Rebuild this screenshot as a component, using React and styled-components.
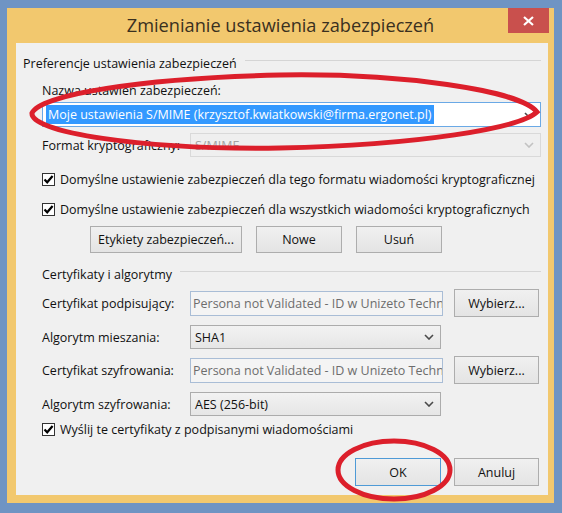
import React from 'react'
import styled, { createGlobalStyle } from 'styled-components'

const GlobalStyle = createGlobalStyle`
  html, body {
    margin: 0;
    padding: 0;
    background: #6f94c3;
  }
  body {
    font-family: "Open Sans", "Noto Sans", sans-serif;
  }
`

const Page = styled.div`
  position: relative;
  width: 562px;
  height: 513px;
  box-sizing: border-box;
  padding: 8px 8px 10px 7px;
  background: #6f94c3;
`

const Window = styled.div`
  height: 495px;
  display: flex;
  flex-direction: column;
  background: #f2c86e;
`

const TitleBar = styled.div`
  height: 35px;
  display: flex;
  align-items: flex-start;
  padding: 0 5px 0 46px;
`

const Title = styled.div`
  flex: 1;
  text-align: center;
  font-size: 18.2px;
  line-height: 35px;
  color: #3a301f;
`

const CloseButton = styled.div`
  width: 41px;
  height: 25px;
  display: flex;
  align-items: center;
  justify-content: center;
  background: #c9504d;
`

const Client = styled.div`
  flex: 1;
  margin: 0 6px 8px 9px;
  padding: 0 7px;
  background: #f0f0f0;
  display: flex;
  flex-direction: column;
  font-size: 12.5px;
  color: #111;
`

const Row = styled.div`
  display: flex;
  align-items: center;
  height: ${p => p.$h || 16}px;
  margin-top: ${p => p.$top || 0}px;
  padding-left: ${p => (p.$indent ?? 19)}px;
  padding-right: ${p => p.$end ? 2 : 0}px;
  justify-content: ${p => p.$end ? 'flex-end' : 'flex-start'};
  gap: ${p => p.$gap || 0}px;
  white-space: nowrap;
`

const GroupLine = styled.div`
  flex: 1;
  height: 1px;
  margin: 0 0 6px 8px;
  background: #d5d5d5;
`

const FieldLabel = styled.div`
  width: 148px;
  flex: none;
`

const Combo = styled.div`
  position: relative;
  box-sizing: border-box;
  height: ${p => p.$h || 24}px;
  width: ${p => p.$w ? `${p.$w}px` : 'auto'};
  flex: ${p => p.$w ? 'none' : 1};
  display: flex;
  align-items: center;
  padding: 0 22px 0 ${p => p.$variant === 'focus' ? 3 : 4}px;
  border: 1px solid ${p =>
    p.$variant === 'focus' ? '#6aa9e6' : p.$variant === 'disabled' ? '#d9d9d9' : '#acacac'};
  background: ${p =>
    p.$variant === 'focus' ? '#ffffff'
      : p.$variant === 'disabled' ? '#efefef'
      : 'linear-gradient(#f2f2f2, #e6e6e6)'};
  color: ${p => p.$variant === 'disabled' ? '#a3a3a3' : '#111'};
  overflow: hidden;
`

const Selected = styled.span`
  background: #3399ff;
  color: #fff;
  padding: 1px 2px;
`

const ChevronBox = styled.svg`
  position: absolute;
  right: 6px;
  top: 50%;
  margin-top: -3px;
`

const TextBox = styled.div`
  box-sizing: border-box;
  width: 253px;
  height: 25px;
  flex: none;
  display: flex;
  align-items: center;
  padding: 0 2px;
  border: 1px solid #a9bdd6;
  background: #f4f4f4;
  color: #6d6d6d;
  overflow: hidden;
  white-space: nowrap;
`

const Button = styled.div`
  box-sizing: border-box;
  width: ${p => p.$w || 86}px;
  height: ${p => p.$h || 27}px;
  flex: none;
  margin-left: ${p => p.$ml || 0}px;
  display: flex;
  align-items: center;
  justify-content: center;
  border: 1px solid ${p => p.$default ? '#4e9ad6' : '#adadad'};
  background: linear-gradient(#f0f0f0, #e4e4e4);
  color: #111;
`

const CheckBox = styled.div`
  box-sizing: border-box;
  width: 13px;
  height: 13px;
  flex: none;
  margin-right: 5px;
  border: 1px solid #333;
  background: #fff;
  display: flex;
  align-items: center;
  justify-content: center;
`

const Annotation = styled.svg`
  position: absolute;
  left: 0;
  top: 0;
  pointer-events: none;
`

const Chevron = ({ disabled }) => (
  <ChevronBox width="10" height="6" viewBox="0 0 10 6">
    <polyline points="1,1 5,5 9,1" fill="none" stroke={disabled ? '#c2c2c2' : '#4a4a4a'} strokeWidth="1.6" />
  </ChevronBox>
)

const Check = ({ label, top }) => (
  <Row $top={top}>
    <CheckBox>
      <svg width="11" height="11" viewBox="0 0 11 11">
        <polyline points="1.5,5.5 4.2,8.3 9.6,2" fill="none" stroke="#000" strokeWidth="2.2" />
      </svg>
    </CheckBox>
    {label}
  </Row>
)

const certName = 'Persona not Validated - ID w Unizeto Techn'

export default function App() {
  return (
    <Page>
      <GlobalStyle />
      <Window>
        <TitleBar>
          <Title>Zmienianie ustawienia zabezpieczeń</Title>
          <CloseButton>
            <svg width="11" height="10" viewBox="0 0 11 10">
              <path d="M1 1 L10 9 M10 1 L1 9" stroke="#fff" strokeWidth="2.2" />
            </svg>
          </CloseButton>
        </TitleBar>
        <Client>
          <Row $top={12} $indent={0}>
            Preferencje ustawienia zabezpieczeń
            <GroupLine />
          </Row>
          <Row $top={11}>Nazwa ustawień zabezpieczeń:</Row>
          <Row $top={4} $h={25}>
            <Combo $variant="focus" $h={25}>
              <Selected>Moje ustawienia S/MIME (krzysztof.kwiatkowski@firma.ergonet.pl)</Selected>
              <Chevron />
            </Combo>
          </Row>
          <Row $top={6} $h={24}>
            <FieldLabel>Format kryptograficzny:</FieldLabel>
            <Combo $variant="disabled">
              S/MIME
              <Chevron disabled />
            </Combo>
          </Row>
          <Check top={14} label="Domyślne ustawienie zabezpieczeń dla tego formatu wiadomości kryptograficznej" />
          <Check top={14} label="Domyślne ustawienie zabezpieczeń dla wszystkich wiadomości kryptograficznych" />
          <Row $top={9} $h={27} $indent={67} $gap={14}>
            <Button $w={152}>Etykiety zabezpieczeń...</Button>
            <Button>Nowe</Button>
            <Button>Usuń</Button>
          </Row>
          <Row $top={13}>
            Certyfikaty i algorytmy
            <GroupLine />
          </Row>
          <Row $top={7} $h={28}>
            <FieldLabel>Certyfikat podpisujący:</FieldLabel>
            <TextBox>{certName}</TextBox>
            <Button $w={85} $h={28} $ml={11}>Wybierz...</Button>
          </Row>
          <Row $top={8} $h={24}>
            <FieldLabel>Algorytm mieszania:</FieldLabel>
            <Combo $w={251}>
              SHA1
              <Chevron />
            </Combo>
          </Row>
          <Row $top={7} $h={28}>
            <FieldLabel>Certyfikat szyfrowania:</FieldLabel>
            <TextBox>{certName}</TextBox>
            <Button $w={85} $h={28} $ml={11}>Wybierz...</Button>
          </Row>
          <Row $top={8} $h={24}>
            <FieldLabel>Algorytm szyfrowania:</FieldLabel>
            <Combo $w={251}>
              AES (256-bit)
              <Chevron />
            </Combo>
          </Row>
          <Check top={5} label="Wyślij te certyfikaty z podpisanymi wiadomościami" />
          <Row $top={21} $h={28} $end $gap={13}>
            <Button $h={28} $default>OK</Button>
            <Button $w={85} $h={28}>Anuluj</Button>
          </Row>
        </Client>
      </Window>
      <Annotation width="562" height="513" viewBox="0 0 562 513">
        <path
          d="M32,113 C40,95 140,78 280,75 C400,73 520,90 537,112 C520,128 420,145 280,148 C140,150 30,132 32,113 Z"
          fill="none"
          stroke="#dc1f2b"
          strokeWidth="5"
        />
        <ellipse cx="394" cy="470" rx="56" ry="29" fill="none" stroke="#dc1f2b" strokeWidth="5" />
      </Annotation>
    </Page>
  )
}
